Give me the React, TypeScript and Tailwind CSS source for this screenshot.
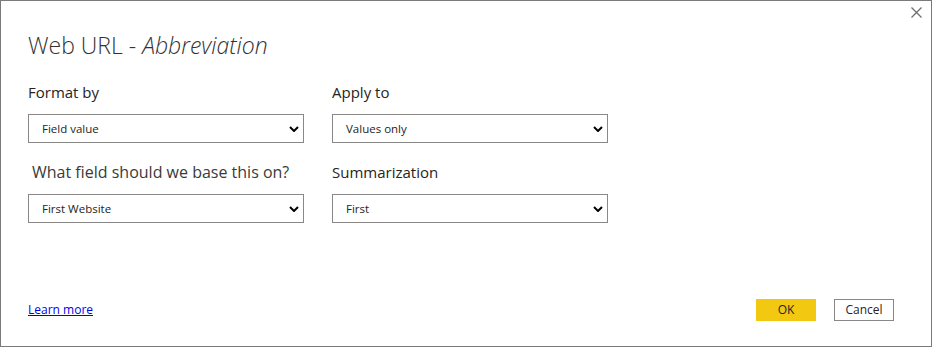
const font = { fontFamily: '"Open Sans", "Noto Sans", Arial, sans-serif' }

function Chevron() {
  return (
    <svg width="10" height="6" viewBox="0 0 10 6" className="shrink-0">
      <polyline points="1,1 5,5 9,1" fill="none" stroke="#000" strokeWidth="2" />
    </svg>
  )
}

function Select({ value }: { value: string }) {
  return (
    <div className="flex h-[29px] w-[276px] items-center justify-between border border-[#8a8886] bg-white pl-[13px] pr-[4px]">
      <span className="text-[11.5px] text-[#252423]">{value}</span>
      <Chevron />
    </div>
  )
}

function Field({ label, value, wide }: { label: string; value: string; wide?: boolean }) {
  return (
    <div className="flex flex-col">
      <label
        className={`h-[32px] leading-[20px] ${wide ? 'pl-[4px] text-[16px] text-[#3b3a39]' : 'text-[15px] text-[#252423]'}`}
      >
        {label}
      </label>
      <Select value={value} />
    </div>
  )
}

export default function App() {
  return (
    <div style={font} className="relative flex h-[347px] w-[932px] flex-col border border-[#7a7a7a] bg-white">
      <button className="absolute right-[9px] top-[6px]">
        <svg width="11" height="11" viewBox="0 0 11 11">
          <path d="M0.5 0.5 L10.5 10.5 M10.5 0.5 L0.5 10.5" stroke="#6e6e6e" strokeWidth="1.3" />
        </svg>
      </button>

      <div className="flex flex-1 flex-col px-[27px] pt-[29px]">
        <h1 className="text-[23px] font-light leading-[30px] text-[#333333]">
          Web URL - <span className="italic">Abbreviation</span>
        </h1>

        <div className="mt-[22px] grid w-fit grid-cols-[276px_276px] gap-x-[28px] gap-y-[19px]">
          <Field label="Format by" value="Field value" />
          <Field label="Apply to" value="Values only" />
          <Field label="What field should we base this on?" value="First Website" wide />
          <Field label="Summarization" value="First" />
        </div>

        <div className="mt-auto mb-[25px] flex items-center justify-between">
          <a href="#" className="text-[12px] text-[#0000ee] underline">
            Learn more
          </a>
          <div className="flex gap-[18px] pr-[10px]">
            <button className="h-[22px] w-[60px] bg-[#f2c811] text-[12px] text-[#252423]">OK</button>
            <button className="h-[22px] w-[60px] border border-[#8a8886] bg-white text-[12px] text-[#252423]">
              Cancel
            </button>
          </div>
        </div>
      </div>
    </div>
  )
}
